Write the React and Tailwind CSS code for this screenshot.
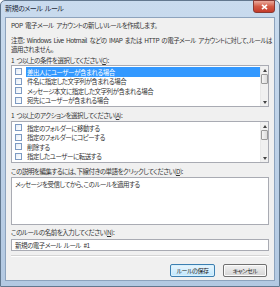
import React from "react";

const font = { fontFamily: '"Noto Sans CJK JP", "Noto Sans", sans-serif' };

function Check() {
  return (
    <span className="w-[7px] h-[7px] border border-[#7d9ac2] bg-gradient-to-br from-[#e4ecf6] to-white shrink-0" />
  );
}

function Row({ text, selected }) {
  return (
    <div className="h-[9.5px] flex items-center gap-[2px]">
      <div className="w-[12px] flex justify-center">
        <Check />
      </div>
      <div
        className={
          "flex-1 h-full flex items-center pl-[1px] whitespace-nowrap overflow-hidden " +
          (selected ? "bg-[#3399ff] text-white" : "text-[#333]")
        }
      >
        {text}
      </div>
    </div>
  );
}

function Scroll() {
  return (
    <div className="w-[8px] flex flex-col items-center bg-[#f0f0f0] border-l border-[#e8e8e8]">
      <div className="h-[8px] flex items-center justify-center">
        <svg width="4" height="3" viewBox="0 0 4 3"><path d="M0 3 L2 0 L4 3 Z" fill="#444" /></svg>
      </div>
      <div className="w-[7px] h-[10px] border border-[#9a9a9a] rounded-[1px] bg-gradient-to-r from-[#f4f4f4] to-[#dcdcdc]" />
      <div className="flex-1" />
      <div className="h-[8px] flex items-center justify-center">
        <svg width="4" height="3" viewBox="0 0 4 3"><path d="M0 0 L2 3 L4 0 Z" fill="#444" /></svg>
      </div>
    </div>
  );
}

function ListBox({ rows, selectedFirst }) {
  return (
    <div className="h-[42px] border border-[#a9abb3] bg-white flex">
      <div className="flex-1 pt-[1px] min-w-0">
        {rows.map((r, i) => (
          <Row key={i} text={r} selected={i === 0 && selectedFirst} />
        ))}
      </div>
      <Scroll />
    </div>
  );
}

export default function App() {
  const cond = ["差出人にユーザーが含まれる場合", "件名に指定した文字列が含まれる場合", "メッセージ本文に指定した文字列が含まれる場合", "宛先にユーザーが含まれる場合"];
  const act = ["指定のフォルダーに移動する", "指定のフォルダーにコピーする", "削除する", "指定したユーザーに転送する"];
  return (
    <div
      className="w-[280px] h-[287px] flex flex-col bg-gradient-to-b from-[#c9dbee] via-[#bdd1e7] to-[#b3c9e2] border border-[#62788f] rounded-t-[5px] text-[6.5px] tracking-[-0.5px] [word-spacing:1.5px] leading-none text-[#333] [font-feature-settings:'palt']"
      style={font}
    >
      <div className="h-[16px] flex items-start justify-between pl-[4px] pr-[4px] shrink-0">
        <div className="pt-[4px] text-[7px] text-[#1e2a3a]">新規のメール ルール</div>
        <div className="w-[22px] h-[13px] mt-[-1px] rounded-b-[3px] border border-[#8a3a34] bg-gradient-to-b from-[#e9a99c] via-[#d35a45] to-[#c43a2a] flex items-center justify-center">
          <svg width="7" height="6" viewBox="0 0 7 6">
            <path d="M1 0.8 L6 5.2 M6 0.8 L1 5.2" stroke="white" strokeWidth="1.6" />
          </svg>
        </div>
      </div>
      <div className="flex-1 mx-[4px] bg-[#f0f0f0] border border-[#8da3bd] flex flex-col px-[5px] pt-[3px]">
        <div className="h-[9px] flex items-center whitespace-nowrap">POP 電子メール アカウントの新しいルールを作成します。</div>
        <div className="mt-[6px] leading-[9px] whitespace-nowrap">
          注意: Windows Live Hotmail などの IMAP または HTTP の電子メール アカウントに対して、ルールは
          <br />
          適用されません。
        </div>
        <div className="mt-[2px] h-[9px] flex items-center whitespace-nowrap">
          1 つ以上の条件を選択してください(<span className="underline">C</span>):
        </div>
        <ListBox rows={cond} selectedFirst />
        <div className="mt-[4px] h-[9px] flex items-center whitespace-nowrap">
          1 つ以上のアクションを選択してください(<span className="underline">A</span>):
        </div>
        <div className="mt-[1px]">
          <ListBox rows={act} />
        </div>
        <div className="mt-[4px] h-[9px] flex items-center whitespace-nowrap">
          この説明を編集するには、下線付きの単語をクリックしてください(<span className="underline">D</span>):
        </div>
        <div className="mt-[1px] h-[48px] border border-[#a9abb3] bg-white px-[3px] pt-[3px]">
          メッセージを受信してから、このルールを適用する
        </div>
        <div className="mt-[3px] h-[9px] flex items-center whitespace-nowrap">
          このルールの名前を入力してください(<span className="underline">N</span>):
        </div>
        <div className="mt-[2px] h-[12px] border border-[#a9abb3] bg-white px-[3px] flex items-center">
          新規の電子メール ルール #1
        </div>
        <div className="mt-[4px] h-[2px] border-t border-[#d5d5d5] border-b border-b-white" />
        <div className="mt-[7px] flex justify-end gap-[8px] pr-[2px]">
          <button className="w-[45px] h-[13px] rounded-[2px] border border-[#3c7fb1] bg-gradient-to-b from-[#eaf6fd] to-[#bee6fd] shadow-[inset_0_0_0_1px_#d9f0fc] text-[6px] text-[#222] flex items-center justify-center">
            ルールの保存
          </button>
          <button className="w-[44px] h-[13px] rounded-[2px] border border-[#707070] bg-gradient-to-b from-[#f2f2f2] to-[#d4d4d4] shadow-[inset_0_0_0_1px_#fbfbfb] text-[6px] text-[#222] flex items-center justify-center">
            キャンセル
          </button>
        </div>
      </div>
      <div className="h-[5px] shrink-0" />
    </div>
  );
}
